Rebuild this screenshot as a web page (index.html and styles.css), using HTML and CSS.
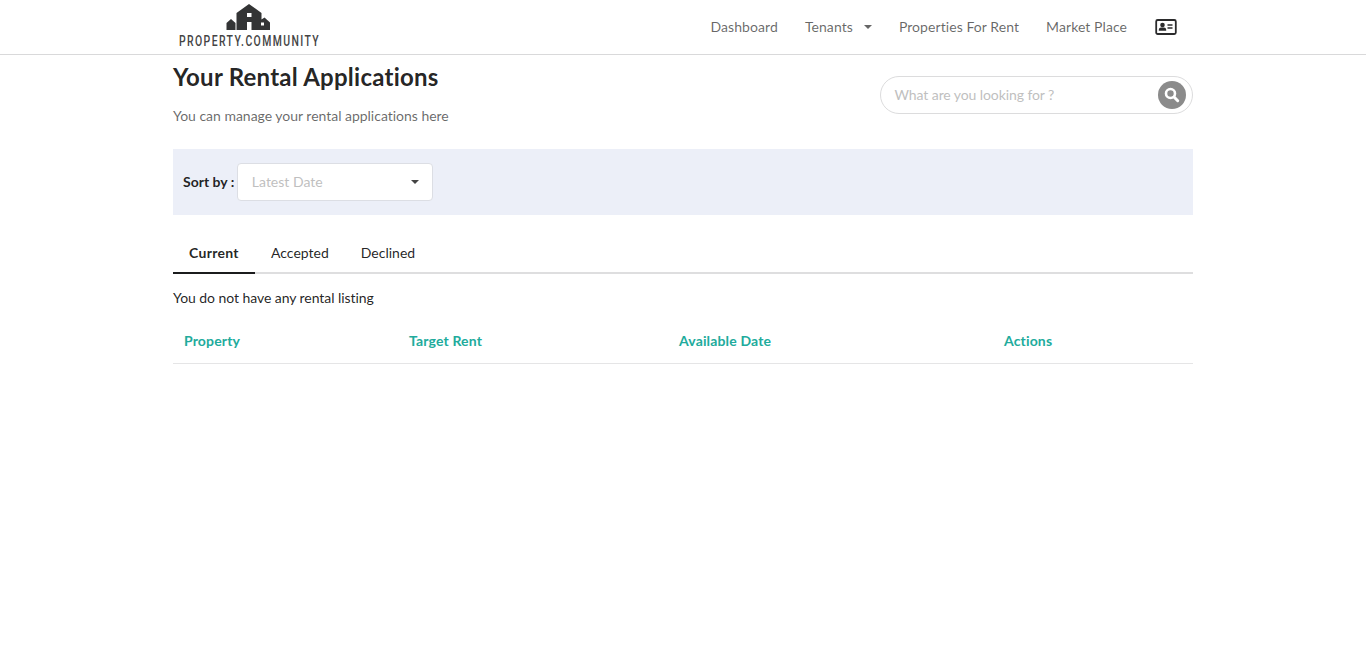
FILE: index.html
```html
<!DOCTYPE html>
<html lang="en">
<head>
<meta charset="utf-8">
<title>Property.Community</title>
<link rel="stylesheet" href="styles.css">
</head>
<body>
<header class="topbar">
  <div class="container topbar-inner">
    <a class="logo">
      <svg width="152" height="54" viewBox="0 0 152 54" role="img" aria-label="Property Community">
        <path class="logo-mark" fill-rule="evenodd" d="M53.500 30V23L58 19L62.500 23V30ZM63.500 30V13L76 4L88.500 13V19.500L91.500 17.500L97 22.500V30H78.500V22H74V30ZM74 13V17H78.500V13ZM88 22.500V25.500H91V22.500Z"/>
        <text class="logo-text" transform="translate(6 46) scale(.72 1)" textLength="194" lengthAdjust="spacing">PROPERTY.COMMUNITY</text>
      </svg>
    </a>
    <nav class="nav">
      <a>Dashboard</a>
      <a class="nav-drop">Tenants<i class="caret"></i></a>
      <a>Properties For Rent</a>
      <a>Market Place</a>
      <a class="nav-card"><svg width="22" height="18" viewBox="0 0 22 18">
        <rect x="1.200" y="2" width="19.600" height="14" rx="1.500" fill="none" stroke="#2b2b2c" stroke-width="1.800"/>
        <circle cx="7.500" cy="7" r="2.300"/><path d="M3.800 12.700V11.500Q4 9.500 6 9.500H9Q11 9.500 11.200 11.500V12.700ZM12.500 6.300H17.500V7.700H12.500ZM12.500 9.300H17.500V10.700H12.500Z"/>
      </svg></a>
    </nav>
  </div>
</header>
<main class="container">
  <section class="heading">
    <div>
      <h1>Your Rental Applications</h1>
      <p>You can manage your rental applications here</p>
    </div>
    <div class="search">
      <span>What are you looking for ?</span>
      <svg width="28" height="28" viewBox="0 0 28 28"><circle cx="14" cy="14" r="14" fill="#8b8b8b"/><circle cx="12.500" cy="12.500" r="4.500" fill="none" stroke="#fff" stroke-width="2.600"/><path d="M16 16L19.700 19.700" stroke="#fff" stroke-width="3" stroke-linecap="round"/></svg>
    </div>
  </section>
  <section class="sort">
    <b>Sort by :</b>
    <div class="select"><span>Latest Date</span><i class="caret"></i></div>
  </section>
  <div class="tabs"><a class="active">Current</a><a>Accepted</a><a>Declined</a></div>
  <p class="empty">You do not have any rental listing</p>
  <table class="listing">
    <thead><tr><th class="c-property">Property</th><th class="c-rent">Target Rent</th><th class="c-date">Available Date</th><th>Actions</th></tr></thead>
  </table>
</main>
</body>
</html>
```
FILE: styles.css
```css
* { box-sizing: border-box; }
body { margin: 0; font: 14px/20px Lato, "Liberation Sans", sans-serif; font-variant-ligatures: none; color: rgba(0,0,0,.87); background: #fff; }
.container { width: 1020px; margin: 0 auto; }
.topbar { height: 55px; border-bottom: 1px solid #d9d9da; }
.topbar-inner { display: flex; justify-content: space-between; height: 54px; }
.logo svg { display: block; }
.logo-mark { fill: #333435; }
.logo-text { font: 500 14.5px Roboto, sans-serif; fill: #444; }
.nav { display: flex; align-items: center; gap: 27px; padding-right: 16px; color: rgba(0,0,0,.6); }
.nav a { white-space: nowrap; letter-spacing: .07px; }
.nav a:nth-child(4) { margin-right: 1px; }
.nav-drop { display: flex; align-items: center; }
.nav-drop .caret { margin-left: 11px; }
.nav-card { fill: #2b2b2c; }
.nav-card svg { display: block; }
.caret { width: 0; height: 0; border: 4px solid transparent; border-top-color: currentColor; border-bottom: 0; }
.heading { display: flex; justify-content: space-between; height: 94px; }
h1 { margin: 6px 0 0; font-size: 24px; line-height: 31px; font-weight: 700; letter-spacing: .24px; }
.heading p { margin: 14px 0 0; color: rgba(0,0,0,.6); letter-spacing: -.02px; }
.search { display: flex; align-items: center; justify-content: space-between; width: 313px; height: 38px; margin-top: 21px; padding: 0 6px 0 13.5px; border: 1px solid #dcdcdd; border-radius: 19px; color: #bfbfbf; letter-spacing: -.09px; }
.sort { display: flex; align-items: center; gap: 3px; height: 66px; padding-left: 10px; background: #eceff8; }
.select { display: flex; align-items: center; justify-content: space-between; width: 196px; height: 38px; padding: 0 13.5px; border: 1px solid #dcdee4; border-radius: 4px; background: #fff; color: #bfbfbf; }
.select .caret { color: #444; }
.tabs { display: flex; height: 41px; margin-top: 18px; border-bottom: 2px solid #dededf; }
.tabs a { height: 41px; padding: 10px 16px 0; }
.tabs .active { width: 82px; font-weight: 700; letter-spacing: .3px; border-bottom: 2px solid #1b1c1d; }
.empty { margin: 14px 0 0; letter-spacing: -.06px; }
.listing { width: 100%; margin-top: 11px; table-layout: fixed; border-collapse: collapse; }
.listing th { height: 44px; padding: 1px 11px 0; text-align: left; letter-spacing: .15px; color: #21ab9c; border-bottom: 1px solid #e5e5e6; }
.c-property { width: 225px; }
.c-rent { width: 270px; }
.c-date { width: 325px; }
```
